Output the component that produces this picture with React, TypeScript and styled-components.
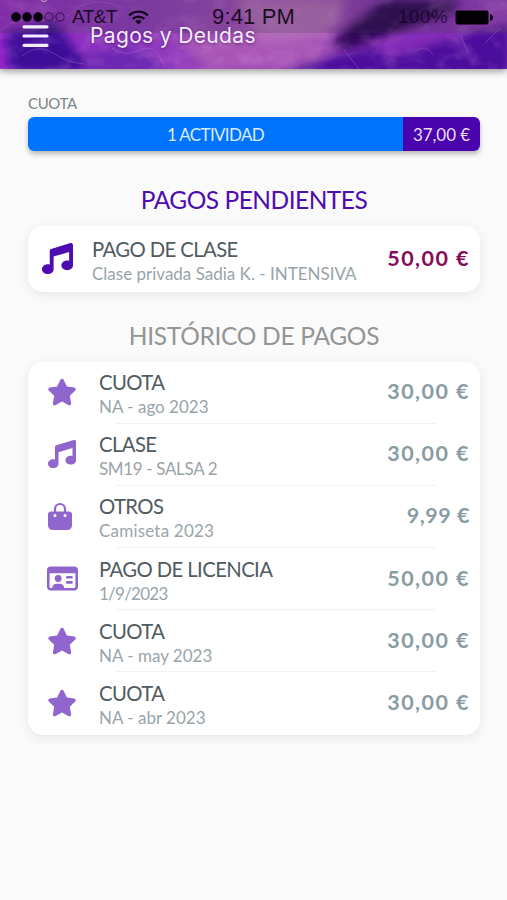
import React from "react";
import styled, { createGlobalStyle } from "styled-components";
import { FaMusic, FaRegIdCard, FaStar } from "react-icons/fa6";

const Global = createGlobalStyle`
  * { box-sizing: border-box; }
  body { margin: 0; background: #fafafa; }
`;

const Screen = styled.div`
  display: flex;
  flex-direction: column;
  min-height: 900px;
  background: #fafafa;
  font-family: Lato, "Open Sans", sans-serif;
  overflow: hidden;
`;

const Header = styled.header`
  position: relative;
  height: 69px;
  flex: none;
  background: #7b30b4;
  box-shadow: 0 2px 7px rgba(0, 0, 0, 0.42);
`;

const Texture = styled.svg`
  position: absolute;
  inset: 0;
  width: 100%;
  height: 100%;
`;

const StatusBar = styled.div`
  position: absolute;
  inset: 0 0 auto;
  height: 33px;
  padding: 1px 14px 0 11px;
  display: grid;
  grid-template-columns: 1fr auto 1fr;
  align-items: center;
  background: rgba(70, 65, 70, 0.25);
  color: rgba(15, 5, 20, 0.93);
  font: 19px/28px "Liberation Sans", Arial, sans-serif;
`;

const StatusGroup = styled.div<{ $end?: boolean }>`
  display: flex;
  align-items: center;
  justify-content: ${(p) => (p.$end ? "flex-end" : "flex-start")};
  gap: 7px;
`;

const Carrier = styled.span`
  margin-right: 4px;
  letter-spacing: -0.6px;
`;

const Clock = styled.span`
  padding-left: 3px;
  font-size: 22px;
  letter-spacing: 0.15px;
`;

const Percent = styled.span`
  letter-spacing: 0.4px;
  color: rgba(15, 0, 25, 0.7);
`;

const TitleRow = styled.div`
  position: absolute;
  inset: 23px 0 auto 22px;
  display: flex;
  align-items: center;
  gap: 41px;
`;

const Title = styled.h1`
  margin: 0;
  color: #f5eafa;
  font: 400 21px/26px Inter, sans-serif;
  letter-spacing: 0.35px;
  text-shadow: 0 1px 3px rgba(30, 0, 60, 0.5);
`;

const Content = styled.main`
  display: flex;
  flex-direction: column;
  padding: 25px 27px 0 28px;
`;

const FeeLabel = styled.div`
  height: 23px;
  font-size: 15px;
  line-height: 19px;
  letter-spacing: -0.35px;
  color: #7c8386;
`;

const FeeBar = styled.div`
  display: flex;
  height: 34px;
  border-radius: 6px;
  overflow: hidden;
  box-shadow: 0 3px 5px rgba(0, 0, 0, 0.27);
  line-height: 35px;
  text-align: center;
`;

const Activity = styled.div`
  flex: 1;
  background: #0074ff;
  color: #d8ebff;
  font-size: 17px;
  letter-spacing: -0.65px;
`;

const Fee = styled.div`
  width: 77px;
  background: #4a04ad;
  color: #ecdcfa;
  font-size: 17px;
  letter-spacing: -0.1px;
`;

const Heading = styled.h2<{ $muted?: boolean }>`
  margin: ${(p) => (p.$muted ? "27px 0 8.5px" : "32px 0 9px")};
  height: 34px;
  color: ${(p) => (p.$muted ? "#929696" : "#4e0cb0")};
  font-size: 24.5px;
  font-weight: 400;
  line-height: 34px;
  letter-spacing: ${(p) => (p.$muted ? -0.3 : -0.5)}px;
  text-align: center;
`;

const Card = styled.section`
  border-radius: 15px;
  background: #fff;
  box-shadow: 0 3px 12px rgba(0, 0, 0, 0.08);
`;

const Row = styled.article<{ $pending?: boolean }>`
  position: relative;
  display: grid;
  grid-template-columns: ${(p) => (p.$pending ? "64px" : "71px")} 1fr auto;
  align-items: center;
  height: ${(p) => (p.$pending ? 66 : 62.2)}px;
  padding-right: 10px;
  &:not(:last-child)::after {
    content: "";
    position: absolute;
    left: 88px;
    right: 44px;
    bottom: 0;
    height: 1px;
    background: #f0f1f1;
  }
`;

const IconCell = styled.div<{ $pending?: boolean }>`
  display: flex;
  justify-content: center;
  padding-right: ${(p) => (p.$pending ? 5 : 3)}px;
  padding-bottom: 1px;
  color: ${(p) => (p.$pending ? "#4e0cb0" : "#9066ce")};
`;

const Copy = styled.div`
  display: flex;
  flex-direction: column;
  gap: 1px;
  padding-top: 4px;
  white-space: nowrap;
`;

const Name = styled.div`
  color: #4f5b60;
  font-size: 20.3px;
  line-height: 24px;
  letter-spacing: -0.6px;
`;

const Detail = styled.div<{ $track: number }>`
  color: #98a4a9;
  font-size: 17px;
  line-height: 24px;
  letter-spacing: ${(p) => p.$track}px;
`;

const Amount = styled.div<{ $pending?: boolean; $track: number }>`
  padding-bottom: 3px;
  color: ${(p) => (p.$pending ? "#850c58" : "#899ca4")};
  font-size: 21.5px;
  font-weight: 700;
  line-height: 28px;
  letter-spacing: ${(p) => p.$track}px;
`;

function Bag() {
  return (
    <svg width="30" height="29" viewBox="0 0 30 29">
      <path d="M8 11V7a5 5 0 0 1 10 0V11" fill="none" stroke="currentColor" strokeWidth="2.2" />
      <path
        fillRule="evenodd"
        fill="currentColor"
        d="M4 9.500h18q3 0 3 3v10.500q0 5-5 5H6q-5 0-5-5v-10.500q0-3 3-3ZM8 12a1.500 1.500 0 1 0 0 3 1.500 1.500 0 0 0 0-3Zm10 0a1.500 1.500 0 1 0 0 3 1.500 1.500 0 0 0 0-3Z"
      />
    </svg>
  );
}

const icons = {
  star: <FaStar size={30} />,
  music: <FaMusic size={28} />,
  bag: <Bag />,
  card: <FaRegIdCard size={31} />,
};

interface Payment {
  icon: keyof typeof icons;
  name: string;
  detail: string;
  amount: string;
  detailTrack?: number;
  amountTrack?: number;
}

const pending: Payment = {
  icon: "music", name: "PAGO DE CLASE", detail: "Clase privada Sadia K. - INTENSIVA", amount: "50,00 €",
};

const history: Payment[] = [
  { icon: "star", name: "CUOTA", detail: "NA - ago 2023", amount: "30,00 €" },
  { icon: "music", name: "CLASE", detail: "SM19 - SALSA 2", amount: "30,00 €", detailTrack: -0.35 },
  { icon: "bag", name: "OTROS", detail: "Camiseta 2023", amount: "9,99 €", detailTrack: 0.2, amountTrack: 0.5 },
  { icon: "card", name: "PAGO DE LICENCIA", detail: "1/9/2023", amount: "50,00 €", detailTrack: -0.75 },
  { icon: "star", name: "CUOTA", detail: "NA - may 2023", amount: "30,00 €" },
  { icon: "star", name: "CUOTA", detail: "NA - abr 2023", amount: "30,00 €" },
];

function PaymentRow({ item, isPending }: { item: Payment; isPending?: boolean }) {
  return (
    <Row $pending={isPending}>
      <IconCell $pending={isPending}>{isPending ? <FaMusic size={31} /> : icons[item.icon]}</IconCell>
      <Copy>
        <Name>{item.name}</Name>
        <Detail $track={item.detailTrack ?? 0}>{item.detail}</Detail>
      </Copy>
      <Amount $pending={isPending} $track={item.amountTrack ?? 1.45}>{item.amount}</Amount>
    </Row>
  );
}

function Amethyst() {
  return (
    <Texture viewBox="0 0 507 69" preserveAspectRatio="none">
      <defs>
        <linearGradient id="base">
          <stop offset="0" stopColor="#9425c8" />
          <stop offset=".25" stopColor="#8a36bd" />
          <stop offset=".6" stopColor="#a750b8" />
          <stop offset=".78" stopColor="#7927ae" />
          <stop offset="1" stopColor="#9a3bc6" />
        </linearGradient>
        <filter id="soft" x="-20%" y="-40%" width="140%" height="180%"><feGaussianBlur stdDeviation="5" /></filter>
        <filter id="fine"><feGaussianBlur stdDeviation=".7" /></filter>
        <filter id="grain" x="0" y="0" width="100%" height="100%">
          <feTurbulence type="fractalNoise" baseFrequency=".04 .06" numOctaves="4" seed="8" />
          <feColorMatrix values="0 0 0 0 .8  0 0 0 0 .38  0 0 0 0 .85  2.4 0 0 0 -1.1" />
        </filter>
      </defs>
      <rect width="507" height="69" fill="url(#base)" />
      <g filter="url(#soft)">
        <path d="M5 34 55 20 72 46 98 72H10Z" fill="#3e0c98" />
        <path d="M88 56 135 46 170 72H80Z" fill="#6b25b2" />
        <path d="M172 36 235 32 330 48 308 65 210 69Z" fill="#a856b6" />
        <path d="M235 0H345L325 38 262 44Z" fill="#b26abb" />
        <path d="M385 0H460L450 15 345 50 330 42Z" fill="#270052" />
        <path d="M285 69 338 55 510 25V75H285Z" fill="#4b0d9c" />
        <path d="M375 42 435 22 480 30 387 58Z" fill="#842ab9" />
      </g>
      <rect width="507" height="69" filter="url(#grain)" opacity=".22" />
      <g filter="url(#fine)" fill="none" stroke="#d287dc" opacity=".3">
        <path d="M0 31q18-16 39-11t41-14q22-9 42 2M22 56q16-13 31-3t31 11M112 48q12 10 28 2t25 18M182 49q6-15 18-15M344 50l15 19M461 36l7 17M415 51q11-8 18 4M485 43l15-15" />
      </g>
      <path d="M41 0q3 3 6 0" fill="none" stroke="#dba5e8" strokeWidth="1.200" />
    </Texture>
  );
}

export default function App() {
  return (
    <Screen>
      <Global />
      <Header>
        <Amethyst />
        <StatusBar>
          <StatusGroup>
            <svg width="54" height="12" viewBox="0 0 54 12">
              {[5, 16, 27, 38, 49].map((x, i) => (
                <circle key={x} cx={x} cy="6" r={i < 3 ? 4.6 : 4.1} fill={i < 3 ? "#09000d" : "none"} stroke="#220a35" strokeWidth=".8" />
              ))}
            </svg>
            <Carrier>AT&amp;T</Carrier>
            <svg width="21" height="15" viewBox="0 0 21 15" fill="none" stroke="#16051c" strokeWidth="2.400">
              <path d="M1.200 5.400a13.300 13.300 0 0 1 18.600 0M4.700 9a8.300 8.300 0 0 1 11.600 0" />
              <path d="M10.500 14.500 7.200 11.200a4.800 4.800 0 0 1 6.600 0Z" fill="#16051c" stroke="none" />
            </svg>
          </StatusGroup>
          <Clock>9:41 PM</Clock>
          <StatusGroup $end>
            <Percent>100%</Percent>
            <svg width="38" height="15" viewBox="0 0 38 15">
              <rect x=".5" y=".5" width="33" height="14" rx="2" fill="#050006" />
              <path d="M35 4q3 1 3 3.500t-3 3.500Z" fill="#110018" />
            </svg>
          </StatusGroup>
        </StatusBar>
        <TitleRow>
          <svg width="27" height="24" viewBox="0 0 27 24">
            <path d="M2 2.800h23M2 12h23M2 21.300h23" stroke="#f5ebff" strokeWidth="3.200" strokeLinecap="round" />
          </svg>
          <Title>Pagos y Deudas</Title>
        </TitleRow>
      </Header>
      <Content>
        <FeeLabel>CUOTA</FeeLabel>
        <FeeBar>
          <Activity>1 ACTIVIDAD</Activity>
          <Fee>37,00 €</Fee>
        </FeeBar>
        <Heading>PAGOS PENDIENTES</Heading>
        <Card><PaymentRow item={pending} isPending /></Card>
        <Heading $muted>HISTÓRICO DE PAGOS</Heading>
        <Card>{history.map((item, i) => <PaymentRow key={i} item={item} />)}</Card>
      </Content>
    </Screen>
  );
}
